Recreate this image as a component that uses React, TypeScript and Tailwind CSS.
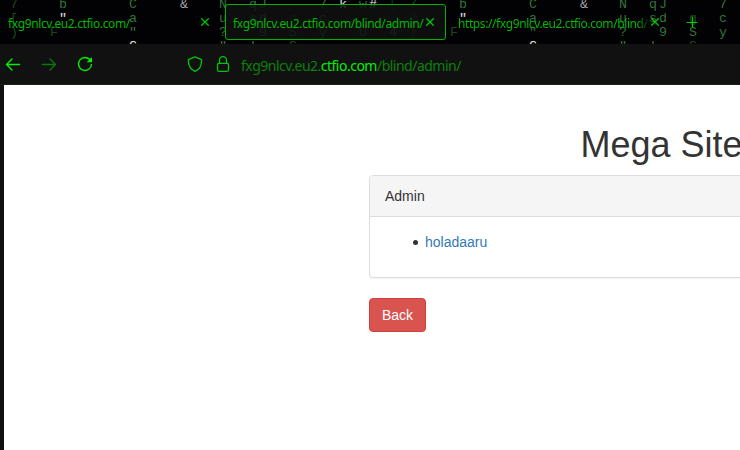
import React from "react";

type Glyph = [x: number, row: number, char: string, color: string];

const GREEN = "#32733a";
const DIM = "#184a1c";
const FAINT = "#113214";
const WHITE = "#e2e2e2";

/* The wallpaper repeats every 400px. */
const rain: Glyph[] = [
  [10, 0, "7", DIM], [10, 1, "[", DIM], [10, 2, ")", DIM],
  [50, 2, "F", DIM], [59, 0, "b", GREEN], [59, 1, '"', WHITE],
  [129, 0, "C", GREEN], [129, 1, "a", GREEN], [129, 2, '"', GREEN], [129, 3, "G", WHITE],
  [180, 0, "&", "#a9a9a9"],
  [219, 0, "N", GREEN], [219, 1, "u", GREEN], [219, 2, "?", GREEN], [219, 3, '"', GREEN],
  [249, 0, "q", GREEN], [259, 0, "J", GREEN], [249, 1, "s", GREEN], [259, 1, "d", GREEN],
  [259, 2, "9", GREEN], [249, 3, "!", GREEN],
  [289, 1, "g", DIM], [289, 2, "S", GREEN], [289, 3, "S", DIM],
  [319, 0, "7", GREEN], [319, 1, "c", GREEN], [319, 2, "y", GREEN],
];
const middle: Glyph[] = [
  [339, 0, "k", WHITE], [359, 0, "w", GREEN], [369, 0, "#", WHITE], [389, 0, "[", FAINT],
  [359, 2, "U", GREEN], [389, 2, "4", GREEN], [409, 0, "7", DIM], [411, 1, "[", DIM],
  [409, 2, ")", DIM],
];

function Rain() {
  const shifted = rain.slice(3).map(([x, r, c, f]): Glyph => [x + 400, r, c, f]);
  return (
    <svg className="absolute inset-0" width="740" height="44" aria-hidden="true" fontFamily="'Liberation Mono', monospace" fontSize="13.3">
      {[...rain, ...middle, ...shifted].map(([x, r, c, f], i) => (
        <text key={i} x={x} y={8 + r * 14} fill={f}>{c}</text>
      ))}
    </svg>
  );
}

function Cross() {
  return (
    <svg className="shrink-0" width="8" height="8" viewBox="0 0 8 8" stroke="#00c800" strokeWidth="1.3">
      <path d="M.3.3l7.4 7.4M7.7.3L.3 7.7" />
    </svg>
  );
}

export default function App() {
  return (
    <div className="flex h-[450px] w-[740px] flex-col overflow-hidden bg-[#111] font-['Liberation_Sans',Arial,sans-serif]">
      <div className="relative h-11 shrink-0 overflow-hidden bg-[#020103]">
        <Rain />
        <div className="relative flex h-full items-center whitespace-nowrap font-['Noto_Sans',sans-serif] text-[12px] text-[#00b800]">
          <div className="flex w-[225px] shrink-0 items-center pl-2">
            <span className="w-[193px] pt-[3px] tracking-[-0.38px]">fxg9nlcv.eu2.ctfio.com/</span>
            <Cross />
          </div>
          <div className="flex h-9 w-[221px] shrink-0 items-center rounded-[3px] border border-[#00b400] bg-[#111111d9] pl-[7px]">
            <span className="w-[193px] pt-[3px] tracking-[-0.38px]">fxg9nlcv.eu2.ctfio.com/blind/admin/</span>
            <Cross />
          </div>
          <div className="flex w-[240px] shrink-0 items-center pl-3">
            <span className="w-[193px] overflow-hidden pt-[3px] tracking-[-0.41px] mask-r-from-93% mask-r-to-100%">https://fxg9nlcv.eu2.ctfio.com/blind/</span>
            <Cross />
          </div>
          <svg width="12" height="12" viewBox="0 0 12 12" stroke="#00c800" strokeWidth="1.2"><path d="M6.5 .5v11M.5 6.5h11" /></svg>
        </div>
      </div>
      <div className="flex h-[41px] shrink-0 items-center border-b border-[#10240f] bg-[#111]">
        <svg className="ml-[5px]" width="16" height="16" viewBox="0 0 16 16" fill="none" stroke="#00f000" strokeWidth="1.4" strokeLinecap="round" strokeLinejoin="round"><path d="M14.5 8.5H1.5M7 3L1.5 8.5 7 14" /></svg>
        <svg className="ml-5" width="16" height="16" viewBox="0 0 16 16" fill="none" stroke="#087808" strokeWidth="1.4" strokeLinecap="round" strokeLinejoin="round"><path d="M1.5 8.5h13M9 3l5.5 5.5L9 14" /></svg>
        <svg className="ml-5" width="16" height="16" viewBox="0 0 16 16" fill="none" stroke="#00f000" strokeWidth="1.4"><path d="M13.3 4.2A6.5 6.5 0 1 0 14.5 8" /><path d="M15 1v5.3H9.7z" fill="#00f000" stroke="none" /></svg>
        <svg className="ml-[94px]" width="16" height="16" viewBox="0 0 16 16" fill="none" stroke="#00c800" strokeWidth="1.3" strokeLinejoin="round"><path d="M8 .8L14.6 3.6C14.8 9 12.5 13.5 8 15.4 3.5 13.5 1.2 9 1.4 3.6z" /></svg>
        <svg className="ml-3" width="16" height="16" viewBox="0 0 16 16" fill="none" stroke="#00c800" strokeWidth="1.3"><rect x="2.5" y="7.3" width="11" height="8" rx="1.5" /><path d="M4.5 7.3V4.2a3.5 3.5 0 0 1 7 0v3.1" /></svg>
        <span className="ml-[10px] whitespace-nowrap pt-[2px] font-['Noto_Sans',sans-serif] text-[14px] tracking-[-0.51px] text-[#0b800b]">
          fxg9nlcv.eu2.<span className="text-[#00f000]">ctfio.com</span>/blind/admin/
        </span>
      </div>
      <main className="ml-1 grow bg-white pl-[365px] pt-[40px] text-[14px] leading-5 text-[#333]">
        <h1 className="mb-[10px] whitespace-nowrap pl-[211.5px] text-[36px] leading-10">Mega Site</h1>
        <section className="mb-5 w-[600px] rounded-[4px] border border-[#ddd] bg-white shadow-[0_1px_1px_rgba(0,0,0,0.05)]">
          <h2 className="rounded-t-[3px] border-b border-[#ddd] bg-[#f5f5f5] px-[15px] py-[10px]">Admin</h2>
          <div className="p-[15px]">
            <ul className="mb-[10px] pl-7">
              <li className="flex items-center gap-[7px]">
                <span className="mt-px size-[5px] rounded-full bg-[#333]" />
                <a className="text-[#337ab7]">holadaaru</a>
              </li>
            </ul>
          </div>
        </section>
        <button className="rounded-[4px] border border-[#d43f3a] bg-[#d9534f] px-3 py-[6px] text-white">Back</button>
      </main>
    </div>
  );
}
